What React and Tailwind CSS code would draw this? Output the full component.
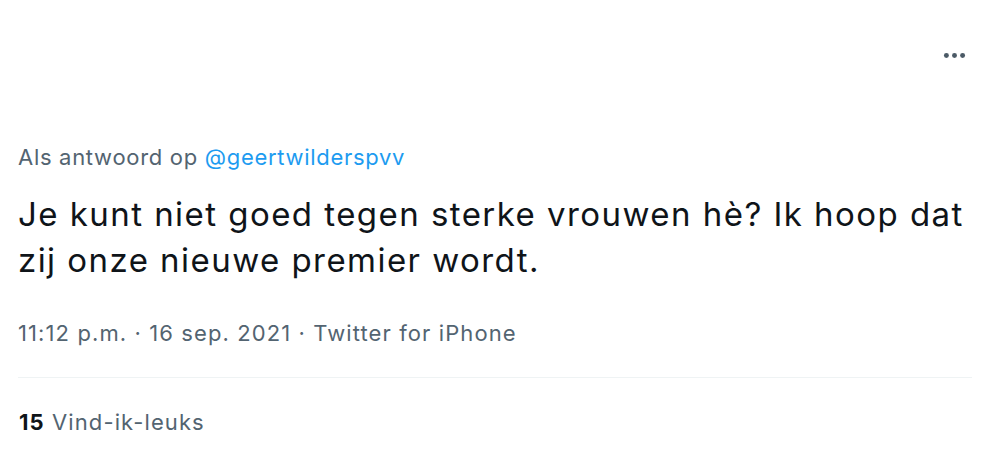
import React from "react";

function MoreIcon() {
  return (
    <svg viewBox="0 0 24 24" className="w-[27px] h-[27px]" fill="#4b5a66">
      <circle cx="4.8" cy="12" r="2.2" />
      <circle cx="12" cy="12" r="2.2" />
      <circle cx="19.2" cy="12" r="2.2" />
    </svg>
  );
}

export default function App() {
  return (
    <div
      className="w-[1000px] h-[460px] bg-white overflow-hidden"
      style={{ fontFamily: "Inter, 'Noto Sans', sans-serif" }}
    >
      <div className="flex justify-end pr-[32px] pt-[42px]">
        <MoreIcon />
      </div>

      <div className="pl-[18px] pr-[28px]">
        {/* reply line */}
        <div className="mt-[74px] text-[22px] leading-[28px] text-[#536471] tracking-[0.7px]">
          Als antwoord op <span className="text-[#1d9bf0]">@geertwilderspvv</span>
        </div>

        {/* tweet text */}
        <p className="mt-[20px] text-[33px] leading-[46px] text-[#0f1419] tracking-[1.45px]">
          Je kunt niet goed tegen sterke vrouwen hè? Ik hoop dat zij onze nieuwe premier wordt.
        </p>

        {/* timestamp */}
        <div className="mt-[36px] text-[22px] leading-[28px] text-[#536471] tracking-[1.1px]">
          11:12 p.m. · 16 sep. 2021 · Twitter for iPhone
        </div>

        <hr className="mt-[30px] border-t border-[#eff3f4]" />

        <div className="mt-[30px] pl-[1px] text-[22px] leading-[28px] text-[#536471] tracking-[1.1px]">
          <span className="font-bold text-[#0f1419]">15</span> Vind-ik-leuks
        </div>
      </div>
    </div>
  );
}
